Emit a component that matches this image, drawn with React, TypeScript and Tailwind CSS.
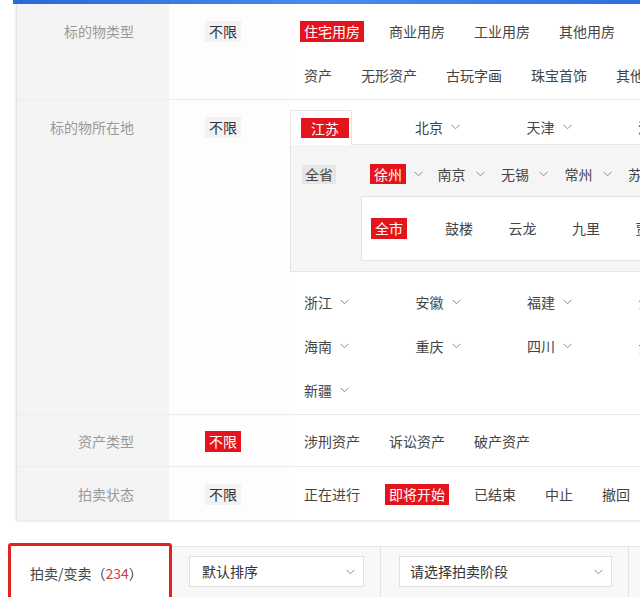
import React from "react";

const RED = "bg-[#e4141c] text-white";

function Chevron({ className = "" }: { className?: string }) {
  return (
    <svg width="9" height="6" viewBox="0 0 9 6" className={className}>
      <polyline points="0.5,0.8 4.5,4.8 8.5,0.8" fill="none" stroke="#8a8a8a" strokeWidth="1" />
    </svg>
  );
}

function Tag({ children, active, muted }: { children: React.ReactNode; active?: boolean; muted?: boolean }) {
  return (
    <span
      className={`inline-block h-[21px] px-[4px] leading-[21px] ${
        active ? RED : muted ? "bg-[#f2f2f2] text-[#333]" : "text-[#444]"
      }`}
    >
      {children}
    </span>
  );
}

interface RowProps {
  label: string;
  first: React.ReactNode;
  children: React.ReactNode;
  top?: string;
  border?: boolean;
}

function Row({ label, first, children, top = "pt-[5px]", border = true }: RowProps) {
  return (
    <div className={`flex ${border ? "border-b border-[#ececec]" : ""}`}>
      <div className={`w-[152px] shrink-0 bg-[#f4f4f5] pr-[35px] text-right text-[#999] ${top}`}>
        <div className="h-[44px] leading-[44px]">{label}</div>
      </div>
      <div className={`w-[121px] shrink-0 bg-[#fdfdfd] pl-[36px] ${top}`}>
        <div className="flex h-[44px] items-center">{first}</div>
      </div>
      <div className="flex-1">{children}</div>
    </div>
  );
}

function Line({ items, active }: { items: string[]; active?: string }) {
  return (
    <div className="flex h-[44px] items-center gap-x-[21px]">
      {items.map((it) => (
        <Tag key={it} active={it === active}>
          {it}
        </Tag>
      ))}
    </div>
  );
}

function Drop({ name }: { name: string }) {
  return (
    <span className="flex h-[44px] w-[111.5px] shrink-0 items-center pl-[14px] text-[#444]">
      {name}
      <Chevron className="ml-[8px]" />
    </span>
  );
}

export default function App() {
  const cities = ["南京", "无锡", "常州", "苏州"];
  const districts = ["鼓楼", "云龙", "九里", "贾汪"];
  const provinceLines = [
    ["浙江", "安徽", "福建", "江西"],
    ["海南", "重庆", "四川", "贵州"],
    ["新疆"],
  ];

  return (
    <div className="h-[597px] w-[640px] overflow-hidden whitespace-nowrap bg-white text-[14px] font-['Noto_Sans_CJK_SC','Noto_Sans',sans-serif]">
      <div className="ml-[13px] h-[4px] bg-gradient-to-r from-[#2a6ad8] via-[#4b8cf0] to-[#2f70e0]" />

      <div className="ml-[16px] w-[760px] border-l border-[#e2e2e2] shadow-[0_1px_3px_rgba(0,0,0,0.12)]">
        {/* 标的物类型 */}
        <Row label="标的物类型" first={<Tag muted>不限</Tag>}>
          <div className="pb-[2px] pl-[10px] pt-[5px]">
            <Line items={["住宅用房", "商业用房", "工业用房", "其他用房", "土地"]} active="住宅用房" />
            <Line items={["资产", "无形资产", "古玩字画", "珠宝首饰", "其他财产"]} />
          </div>
        </Row>

        {/* 标的物所在地 */}
        <Row label="标的物所在地" first={<Tag muted>不限</Tag>}>
          <div className="pb-[2px] pt-[10px]">
            <div className="flex h-[35px]">
              <div className="flex w-[62px] shrink-0 items-center border-l border-r border-t border-[#e5e5e5] bg-white pl-[10px]">
                <span className={`h-[20px] px-[10px] leading-[20px] ${RED}`}>江苏</span>
              </div>
              <div className="flex flex-1 border-b border-[#e5e5e5] pl-[49px]">
                {["北京", "天津", "河北"].map((p) => (
                  <span key={p} className="flex w-[111.5px] items-center pl-[14px] text-[#444]">
                    {p}
                    <Chevron className="ml-[8px]" />
                  </span>
                ))}
              </div>
            </div>

            <div className="border-b border-l border-[#e5e5e5] bg-[#f5f5f5] pb-[10px] pt-[7px]">
              <div className="flex h-[44px] items-center pl-[11px]">
                <span className="h-[19px] bg-[#e6e6e6] px-[3px] leading-[19px] text-[#444]">全省</span>
                <span className="ml-[34px] flex w-[63.5px] items-center">
                  <span className={`h-[20px] px-[4px] leading-[20px] ${RED}`}>徐州</span>
                  <Chevron className="ml-[8px]" />
                </span>
                {cities.map((c) => (
                  <span key={c} className="flex w-[63.5px] items-center pl-[4px] text-[#444]">
                    {c}
                    <Chevron className="ml-[10px]" />
                  </span>
                ))}
              </div>
              <div className="ml-[70px] flex h-[65px] items-center border border-r-0 border-[#e3e3e3] bg-white pl-[9px]">
                <span className="w-[70px]">
                  <span className={`inline-block h-[21px] px-[4px] leading-[21px] ${RED}`}>全市</span>
                </span>
                {districts.map((d) => (
                  <span key={d} className="w-[63.5px] pl-[4px] text-[#444]">
                    {d}
                  </span>
                ))}
              </div>
            </div>

            <div className="mt-[8px]">
              {provinceLines.map((line, i) => (
                <div key={i} className="flex">
                  {line.map((p) => (
                    <Drop key={p} name={p} />
                  ))}
                </div>
              ))}
            </div>
          </div>
        </Row>

        {/* 资产类型 */}
        <Row label="资产类型" first={<Tag active>不限</Tag>} top="pt-[4px]">
          <div className="pb-[3px] pl-[10px] pt-[4px]">
            <Line items={["涉刑资产", "诉讼资产", "破产资产"]} />
          </div>
        </Row>

        {/* 拍卖状态 */}
        <Row label="拍卖状态" first={<Tag muted>不限</Tag>} border={false}>
          <div className="pb-[4px] pl-[10px] pt-[5px]">
            <Line items={["正在进行", "即将开始", "已结束", "中止", "撤回"]} active="即将开始" />
          </div>
        </Row>
      </div>

      {/* 结果栏 */}
      <div className="mt-[23px] flex items-start">
        <div className="ml-[8px] flex h-[60px] w-[164px] shrink-0 items-center rounded-[3px] border-[3px] border-[#e42222] bg-white pl-[19px] text-[#444]">
          拍卖/变卖（<span className="text-[#d23b3b]">234</span>）
        </div>
        <div className="mt-[3px] flex h-[60px] flex-1 items-start border-t border-[#e6e6e6] bg-[#f8f8f8]">
          <div className="ml-[17px] mt-[9px] flex h-[31px] w-[175px] items-center justify-between border border-[#e0e0e0] bg-white pl-[12px] pr-[8px] text-[#333]">
            默认排序
            <Chevron />
          </div>
          <div className="ml-[16px] h-full w-px bg-[#e4e4e4]" />
          <div className="ml-[18px] mt-[9px] flex h-[31px] w-[213px] items-center justify-between border border-[#e0e0e0] bg-white pl-[10px] pr-[8px] text-[#333]">
            请选择拍卖阶段
            <Chevron />
          </div>
          <div className="ml-[16px] h-full w-px bg-[#e4e4e4]" />
        </div>
      </div>
    </div>
  );
}
